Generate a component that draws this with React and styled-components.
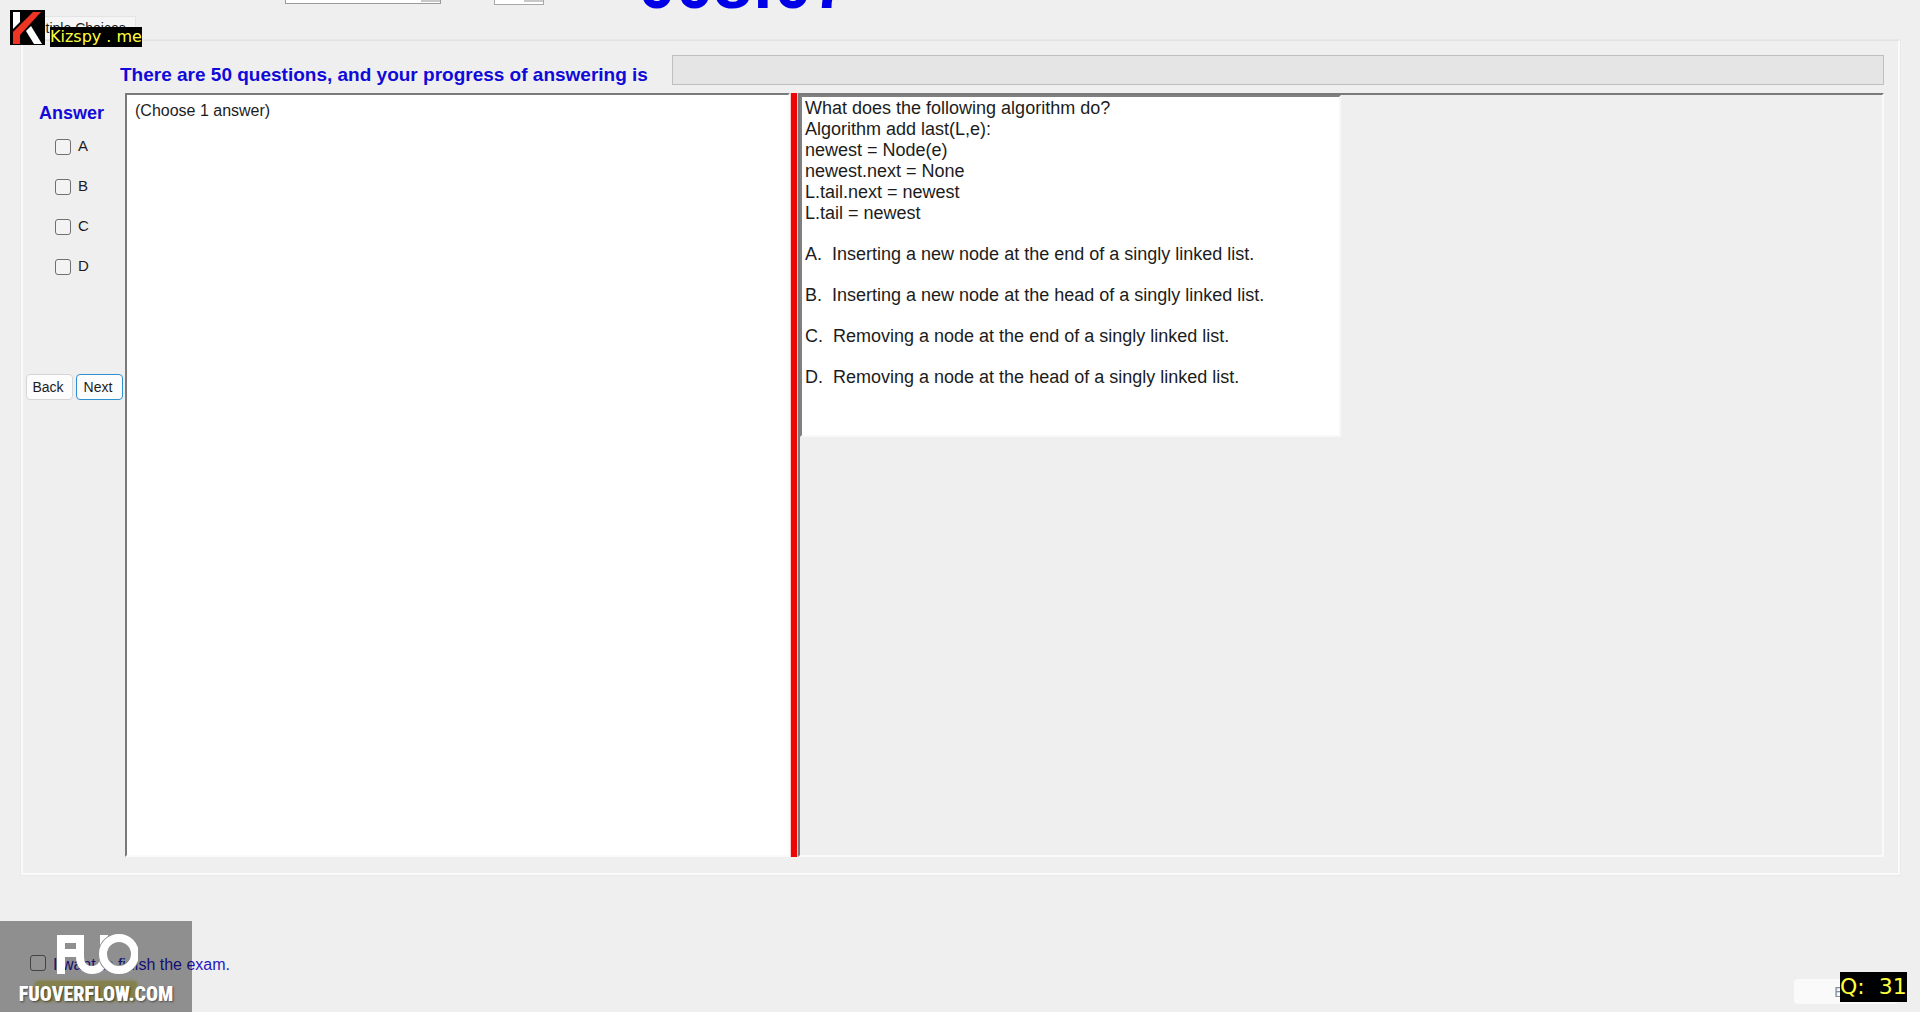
import styled, { createGlobalStyle } from 'styled-components';

const Global = createGlobalStyle`
    * { box-sizing: border-box; }
    body {
        margin: 0;
        background: #efefef;
        color: #1c1c1c;
        font-family: 'Liberation Sans', Arial, sans-serif;
    }
`;

const Page = styled.div`
    min-height: 100vh;
    display: flex;
    flex-direction: column;
    overflow: hidden;
`;

// Strip above the tabs, scrolled mostly out of view
const TopBar = styled.header`
    height: 16px;
    padding-left: 285px;
    display: flex;
    align-items: flex-start;
`;

const TopSelect = styled.select`
    appearance: none;
    width: 156px;
    height: 24px;
    margin: -20px 53px 0 0;
    border: 1px solid #9a9a9a;
    border-radius: 0;
    background: linear-gradient(#c8c8c8, #c8c8c8) right / 19px 20px no-repeat #ffffff;
`;

const TopNumber = styled.input`
    width: 50px;
    height: 24px;
    margin: -19px 94px 0 0;
    border: 1px solid #a8a8a8;
    background: linear-gradient(#c8c8c8, #c8c8c8) right top / 19px 20px no-repeat #ffffff;
`;

const Timer = styled.div`
    margin-top: -52px;
    color: #0000e6;
    font-size: 68px;
    font-weight: bold;
    line-height: 72px;
`;

const Tab = styled.button`
    align-self: flex-start;
    width: 114px;
    height: 24px;
    margin-left: 22px;
    padding: 0 10px 2px 0;
    border: 1px solid #e4e4e4;
    border-bottom: none;
    background: #f5f5f5;
    color: #1c1c1c;
    font-family: inherit;
    font-size: 14px;
    line-height: 20px;
    text-align: right;
    white-space: nowrap;
`;

const TabPage = styled.main`
    margin: 0 20px 0 21px;
    padding: 13px 14px 16px 2px;
    border: 2px solid #fafafa;
    border-top: 1px solid #e2e2e2;
    outline: 1px solid #e9e9e9;
`;

const ProgressRow = styled.div`
    display: flex;
    align-items: center;
    height: 32px;
    padding-left: 95px;
    margin-bottom: 7px;
`;

const ProgressText = styled.label`
    width: 552px;
    padding-top: 9px;
    color: #0f0ad8;
    font-size: 19px;
    font-weight: bold;
    white-space: nowrap;
`;

const Progress = styled.progress`
    flex: 1;
    height: 30px;
    appearance: none;
    border: 1px solid #bfbfbf;
    background: #e5e5e5;

    &::-webkit-progress-bar {
        background: #e5e5e5;
    }
`;

const Columns = styled.div`
    display: flex;
    height: 764px;
`;

const Side = styled.aside`
    width: 100px;
    flex: none;
`;

const AnswerTitle = styled.h2`
    margin: 9px 0 15px 14px;
    color: #1409d8;
    font-size: 18px;
    line-height: 22px;
`;

const Choice = styled.label`
    display: flex;
    align-items: center;
    gap: 7px;
    height: 16px;
    margin: 0 0 24px 30px;
    font-size: 15px;
    line-height: 16px;
`;

const ChoiceName = styled.span`
    padding-bottom: 2px;
`;

const CheckBox = styled.input.attrs({ type: 'checkbox' })`
    appearance: none;
    width: 16px;
    height: 16px;
    margin: 0;
    border: 1px solid #707070;
    border-radius: 3px;
    background: #f3f3f3;
`;

const Nav = styled.div`
    display: flex;
    gap: 3px;
    margin-top: 75px;
    padding: 24px 0 0 1px;
`;

const NavButton = styled.button`
    width: 47px;
    height: 26px;
    padding: 0 3px 0 0;
    border: 1px solid ${(props) => (props.$active ? '#2f8fd0' : '#d5d5d5')};
    border-radius: 4px;
    background: #fcfcfc;
    color: #1c1c1c;
    font-family: inherit;
    font-size: 14px;
`;

const AnswerPane = styled.section`
    width: 665px;
    padding: 6px 8px;
    border: 2px solid #fafafa;
    border-top-color: #7a7a7a;
    border-left-color: #7a7a7a;
    background: #ffffff;
    font-size: 16px;
    line-height: 20px;
`;

const Splitter = styled.div`
    width: 8px;
    border: 1px solid #f8caca;
    border-width: 0 1px;
    background: #ee0505;
`;

const QuestionPane = styled.section`
    flex: 1;
    border: 2px solid #fafafa;
    border-top-color: #7a7a7a;
    border-left-color: #7a7a7a;
`;

const Question = styled.article`
    width: 541px;
    height: 342px;
    padding: 1px 3px;
    border: 2px solid #f8f8f8;
    border-top-color: #808080;
    border-left-color: #808080;
    background: #ffffff;
    font-size: 18px;
    line-height: 21px;
`;

const Lines = styled.p`
    margin: 0 0 20px;
    white-space: pre-line;
`;

const Option = styled.p`
    margin: 0 0 20px;
    white-space: pre;
`;

const Footer = styled.footer`
    flex: 1;
    display: flex;
    justify-content: space-between;
    align-items: flex-start;
    padding: 79px 22px 0 30px;
`;

const FinishLabel = styled.label`
    display: flex;
    align-items: center;
    gap: 7px;
    height: 18px;
    color: #2418c0;
    font-size: 16px;
`;

const FinishText = styled.span`
    padding-top: 3px;
`;

const FinishButton = styled.button`
    display: block;
    width: 102px;
    height: 20px;
    margin: 9px 0 0 5px;
    border: none;
    border-radius: 4px;
    background: #dcd884;
    box-shadow: 0 0 4px #dcd884;
`;

const ExitButton = styled.button`
    width: 104px;
    height: 25px;
    margin-top: 25px;
    padding: 0;
    border: none;
    border-radius: 4px;
    background: #fafafa;
    color: #8c8c8c;
    font-family: inherit;
    font-size: 14px;
`;

const Brand = styled.div`
    position: absolute;
    top: 10px;
    left: 10px;
    display: flex;
    gap: 5px;
`;

const BrandName = styled.span`
    height: 20px;
    margin-top: 17px;
    background: #000000;
    color: #ffff3c;
    font-family: 'DejaVu Sans', sans-serif;
    font-size: 16px;
    line-height: 19px;
`;

const Dot = styled.span`
    margin: 0 5px;
`;

const Watermark = styled.div`
    position: absolute;
    left: 0;
    bottom: 0;
    width: 192px;
    height: 91px;
    padding-top: 13px;
    background: rgba(0, 0, 0, 0.4);
    color: #ffffff;
    display: flex;
    flex-direction: column;
    align-items: center;
    font-family: 'Roboto Condensed', Roboto, sans-serif;
    font-size: 20px;
    font-weight: 900;
    line-height: 38px;
    text-shadow: 1px 1px 2px rgba(0, 0, 0, 0.5);

    svg {
        flex: none;
    }
`;

const Counter = styled.div`
    position: absolute;
    right: 13px;
    bottom: 10px;
    width: 67px;
    height: 30px;
    background: #000000;
    color: #ffff3c;
    font-family: 'DejaVu Sans', sans-serif;
    font-size: 22px;
    line-height: 30px;
    white-space: pre;
`;

const choices = ['A', 'B', 'C', 'D'];

const questionText = `What does the following algorithm do?
Algorithm add last(L,e):
newest = Node(e)
newest.next = None
L.tail.next = newest
L.tail = newest`;

const options = [
    'A.  Inserting a new node at the end of a singly linked list.',
    'B.  Inserting a new node at the head of a singly linked list.',
    'C.  Removing a node at the end of a singly linked list.',
    'D.  Removing a node at the head of a singly linked list.',
];

function KLogo() {
    return (
        <svg width="35" height="35" viewBox="0 0 35 35">
            <rect width="35" height="35" fill="#000" />
            <path d="M3 2h7v10l-7 7z" fill="#fff" />
            <path d="M23 2h8L10 25v9H3V22z" fill="#ee3524" />
            <path d="M16 21l5-5 11 18h-8z" fill="#fff" />
        </svg>
    );
}

function FuoLogo() {
    return (
        <svg width="84" height="41" viewBox="-3 0 84 41">
            <g fill="none" stroke="#fff" strokeWidth="8">
                <path d="M4 40V5h15M4 19h15" />
                <path d="M23 1v22c0 8 5 13 12 13s11-4 12-11M47 12V1" />
                <circle cx="62" cy="20" r="16" stroke="#8f8f8f" strokeWidth="10" />
                <circle cx="62" cy="20" r="16" />
            </g>
        </svg>
    );
}

export default function App() {
    return (
        <Page>
            <Global />
            <TopBar>
                <TopSelect aria-label="Font" />
                <TopNumber type="text" aria-label="Size" />
                <Timer>008:07</Timer>
            </TopBar>
            <Tab>Multiple Choices</Tab>

            <TabPage>
                <ProgressRow>
                    <ProgressText htmlFor="progress">
                        There are 50 questions, and your progress of answering is
                    </ProgressText>
                    <Progress id="progress" value="0" max="50" />
                </ProgressRow>

                <Columns>
                    <Side>
                        <AnswerTitle>Answer</AnswerTitle>
                        {choices.map((name) => (
                            <Choice key={name}>
                                <CheckBox />
                                <ChoiceName>{name}</ChoiceName>
                            </Choice>
                        ))}
                        <Nav>
                            <NavButton>Back</NavButton>
                            <NavButton $active>Next</NavButton>
                        </Nav>
                    </Side>
                    <AnswerPane>(Choose 1 answer)</AnswerPane>
                    <Splitter />
                    <QuestionPane>
                        <Question>
                            <Lines>{questionText}</Lines>
                            {options.map((text) => (
                                <Option key={text}>{text}</Option>
                            ))}
                        </Question>
                    </QuestionPane>
                </Columns>
            </TabPage>

            <Footer>
                <div>
                    <FinishLabel>
                        <CheckBox />
                        <FinishText>I want to finish the exam.</FinishText>
                    </FinishLabel>
                    <FinishButton aria-label="Finish" />
                </div>
                <ExitButton>Exit</ExitButton>
            </Footer>

            <Brand>
                <KLogo />
                <BrandName>Kizspy<Dot>.</Dot>me</BrandName>
            </Brand>
            <Watermark>
                <FuoLogo />
                FUOVERFLOW.COM
            </Watermark>
            <Counter>Q:  31</Counter>
        </Page>
    );
}
